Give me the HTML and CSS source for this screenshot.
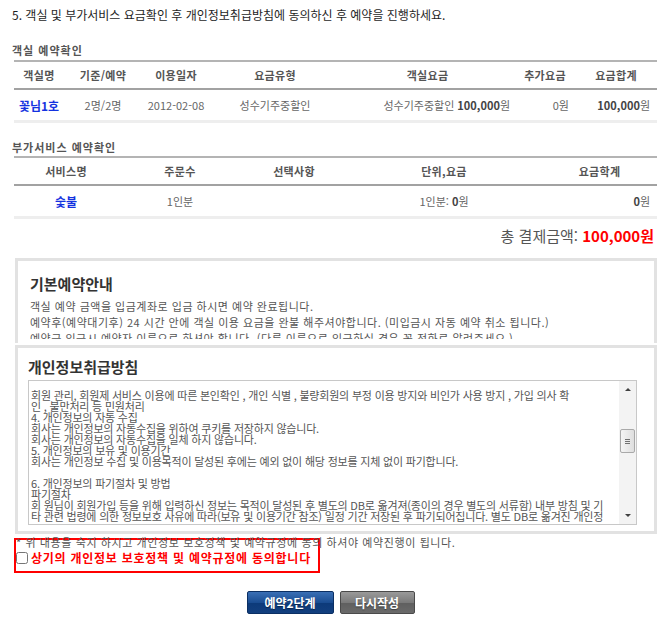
FILE: index.html
```html
<!DOCTYPE html>
<html lang="ko">
<head>
    <meta charset="UTF-8">
    <meta name="viewport" content="width=device-width, initial-scale=1.0">
    <title>예약확인</title>
    <link rel="stylesheet" href="styles.css">
</head>
<body>

<div class="wrap">
    <h3 class="step-title">5. 객실 및 부가서비스 요금확인 후 개인정보취급방침에 동의하신 후 예약을 진행하세요.</h3>

    <div class="section-label">객실 예약확인</div>
    <table class="list-table room-table">
        <colgroup>
            <col style="width:50px"><col style="width:78px"><col style="width:68px"><col style="width:130px">
            <col style="width:175px"><col style="width:60px"><col style="width:82px">
        </colgroup>
        <thead>
            <tr>
                <th>객실명</th>
                <th>기준/예약</th>
                <th>이용일자</th>
                <th>요금유형</th>
                <th>객실요금</th>
                <th>추가요금</th>
                <th>요금합계</th>
            </tr>
        </thead>
        <tbody>
            <tr>
                <td><a href="#" class="item-name">꽃님1호</a></td>
                <td>2명/2명</td>
                <td>2012-02-08</td>
                <td>성수기주중할인</td>
                <td class="num">성수기주중할인 <b>100,000</b>원</td>
                <td class="num">0원</td>
                <td class="num"><b>100,000</b>원</td>
            </tr>
        </tbody>
    </table>

    <div class="section-label second">부가서비스 예약확인</div>
    <table class="list-table option-table">
        <colgroup>
            <col style="width:104px"><col style="width:124px"><col style="width:104px"><col style="width:196px"><col style="width:115px">
        </colgroup>
        <thead>
            <tr>
                <th>서비스명</th>
                <th>주문수</th>
                <th>선택사항</th>
                <th>단위,요금</th>
                <th>요금학계</th>
            </tr>
        </thead>
        <tbody>
            <tr>
                <td><a href="#" class="item-name">숯불</a></td>
                <td>1인분</td>
                <td></td>
                <td>1인분: <b>0</b>원</td>
                <td class="num"><b>0</b>원</td>
            </tr>
        </tbody>
    </table>

    <div class="total">총 결제금액: <span class="total-price">100,000원</span></div>

    <div class="info-box">
        <h4 class="box-title">기본예약안내</h4>
        <div class="info-text">
            객실 예약 금액을 입금계좌로 입금 하시면 예약 완료됩니다.<br>
            예약후(예약대기후) 24 시간 안에 객실 이용 요금을 완불 해주셔야합니다. (미입금시 자동 예약 취소 됩니다.)<br>
            예약금 입금시 예약자 이름으로 하셔야 합니다. (다른 이름으로 입금하실 경우 꼭 전화로 알려주세요.)
        </div>
    </div>

    <div class="policy-box">
        <h4 class="box-title">개인정보취급방침</h4>
        <div class="policy-frame">
            <div class="policy-text">회원 관리, 회원제 서비스 이용에 따른 본인확인 , 개인 식별 , 불량회원의 부정 이용 방지와 비인가 사용 방지 , 가입 의사 확
인 , 불만처리 등 민원처리
4. 개인정보의 자동 수집
회사는 개인정보의 자동수집을 위하여 쿠키를 저장하지 않습니다.
회사는 개인정보의 자동수집을 일체 하지 않습니다.
5. 개인정보의 보유 및 이용기간
회사는 개인정보 수집 및 이용목적이 달성된 후에는 예외 없이 해당 정보를 지체 없이 파기합니다.

6. 개인정보의 파기절차 및 방법
파기절차
회 원님이 회원가입 등을 위해 입력하신 정보는 목적이 달성된 후 별도의 DB로 옮겨져(종이의 경우 별도의 서류함) 내부 방침 및 기
타 관련 법령에 의한 정보보호 사유에 따라(보유 및 이용기간 참조) 일정 기간 저장된 후 파기되어집니다. 별도 DB로 옮겨진 개인정</div>
            <div class="scrollbar" aria-hidden="true">
                <span class="sb-btn sb-up"></span>
                <span class="sb-track"><span class="sb-thumb"></span></span>
                <span class="sb-btn sb-down"></span>
            </div>
        </div>
    </div>

    <div class="agree-box">
        <p class="agree-note">* 위 내용을 숙지 하시고 개인정보 보호정책 및 예약규정에 동의 하셔야 예약진행이 됩니다.</p>
        <label class="agree-check">
            <input type="checkbox" name="agree">
            <span>상기의 개인정보 보호정책 및 예약규정에 동의합니다</span>
        </label>
    </div>

    <div class="btn-area">
        <button type="button" class="btn btn-next">예약2단계</button>
        <button type="button" class="btn btn-reset">다시작성</button>
    </div>
</div>

</body>
</html>
```

FILE: styles.css
```css
/* 기본 */
body {
    margin: 0;
    padding: 0;
    background: #ffffff;
    font-family: "Noto Sans CJK KR", "Noto Sans", sans-serif;
    color: #555555;
}

.wrap {
    width: 645px;
    margin-left: 12px;
}

/* 단계 제목 */
.step-title {
    margin: 6px 0 0 0;
    font-size: 12px;
    line-height: 18px;
    font-weight: normal;
    color: #1e1e1e;
}

.section-label {
    margin-top: 19px;
    font-size: 11px;
    line-height: 14px;
    font-weight: bold;
    letter-spacing: 1px;
    color: #555555;
}

.section-label.second {
    margin-top: 17px;
}

/* 목록 테이블 */
.list-table {
    width: 643px;
    margin: 3px 0 0 2px;
    border-collapse: collapse;
    table-layout: fixed;
    border-top: 2px solid #b4b4b4;
    border-bottom: 3px solid #eeeeee;
}

.option-table {
    margin-top: 2px;
}

.list-table th {
    height: 26px;
    padding: 0;
    font-size: 11px;
    font-weight: bold;
    letter-spacing: 0.3px;
    color: #555555;
    text-align: center;
    border-bottom: 2px solid #a2a2a2;
}

.list-table td {
    height: 30px;
    padding: 0;
    font-size: 11px;
    color: #666666;
    text-align: center;
    white-space: nowrap;
}

.list-table td b {
    color: #444444;
}

.list-table td.num {
    text-align: right;
    padding-right: 5px;
}

.room-table td:nth-child(6) {
    padding-right: 6px;
}

.room-table td:nth-child(7),
.option-table td:nth-child(5) {
    padding-right: 7px;
}

.item-name {
    font-size: 12px;
    font-weight: bold;
    color: #1432e0;
    text-decoration: none;
}

/* 총 결제금액 */
.total {
    margin-top: 7px;
    padding-right: 3px;
    text-align: right;
    font-size: 15px;
    line-height: 20px;
    color: #555555;
}

.total-price {
    color: #ff0000;
    font-weight: bold;
}

/* 안내 박스 */
.info-box,
.policy-box {
    margin-left: 3px;
    border: 3px solid #e2e2e2;
    padding: 0 12px;
    background: #ffffff;
}

.info-box {
    margin-top: 12px;
    height: 82px;
    border-bottom: 0;
    overflow: hidden;
}

.box-title {
    margin: 14px 0 0 0;
    font-size: 15px;
    line-height: 18px;
    font-weight: bold;
    color: #333333;
}

.info-text {
    margin-top: 5px;
    height: 41px;
    overflow: hidden;
    font-size: 11px;
    line-height: 16px;
    letter-spacing: 0.5px;
    color: #555555;
}

.policy-box {
    margin-top: 2px;
    padding: 0 10px 6px 10px;
}

.policy-box .box-title {
    margin-top: 10px;
}

/* 약관 스크롤 영역 */
.policy-frame {
    display: flex;
    width: 609px;
    height: 145px;
    margin-top: 4px;
    box-sizing: border-box;
    border: 1px solid #c8c8c8;
}

.policy-text {
    flex: 1;
    min-width: 0;
    padding: 9px 0 0 2px;
    font-size: 11px;
    line-height: 11px;
    letter-spacing: -0.2px;
    color: #555555;
    white-space: pre;
    overflow: hidden;
}

/* 구형 윈도우 스크롤바 모양 */
.scrollbar {
    display: flex;
    flex-direction: column;
    width: 17px;
    background: #f3f3f3;
}

.sb-btn {
    display: flex;
    align-items: center;
    justify-content: center;
    height: 17px;
    flex: none;
}

.sb-up::after {
    content: "";
    border-left: 3px solid transparent;
    border-right: 3px solid transparent;
    border-bottom: 3px solid #404040;
}

.sb-down::after {
    content: "";
    border-left: 3px solid transparent;
    border-right: 3px solid transparent;
    border-top: 3px solid #404040;
}

.sb-track {
    flex: 1;
    padding-top: 31px;
}

.sb-thumb {
    display: block;
    height: 24px;
    margin: 0 1px;
    box-sizing: border-box;
    border: 1px solid #a9a9a9;
    border-radius: 2px;
    background: repeating-linear-gradient(#707070 0 1px, transparent 1px 2px) center / 5px 5px no-repeat,
                linear-gradient(to right, #f4f4f4, #dedede);
}

/* 동의 */
.agree-box {
    width: 302px;
    margin: 4px 0 0 2px;
    border: 2px solid #ff0000;
    padding-bottom: 6px;
}

.agree-note {
    margin: -5px 0 0 0;
    font-size: 11px;
    line-height: 14px;
    letter-spacing: 0.6px;
    color: #555555;
    white-space: nowrap;
}

.agree-check {
    display: flex;
    align-items: center;
    height: 16px;
    font-size: 12px;
    font-weight: bold;
    letter-spacing: 0.75px;
    color: #ff0000;
    white-space: nowrap;
}

.agree-check input {
    width: 12px;
    height: 12px;
    margin: 2px 3px 0 0;
}

/* 버튼 */
.btn-area {
    display: flex;
    justify-content: center;
    gap: 6px;
    margin-top: 18px;
    padding-right: 8px;
}

.btn {
    height: 23px;
    padding: 0;
    border-radius: 2px;
    font-family: "Noto Sans CJK KR", sans-serif;
    font-size: 12px;
    font-weight: bold;
    color: #ffffff;
    text-shadow: 0 1px 1px rgba(0, 0, 0, 0.4);
    cursor: pointer;
}

.btn-next {
    width: 87px;
    border: 1px solid #0b2f63;
    background: linear-gradient(#3a6fb5, #1a4d92 50%, #0c3a7a 51%, #123f7e);
}

.btn-reset {
    width: 75px;
    border: 1px solid #4a4a4a;
    background: linear-gradient(#9a9a9a, #7a7a7a 50%, #5f5f5f 51%, #6a6a6a);
}
```
